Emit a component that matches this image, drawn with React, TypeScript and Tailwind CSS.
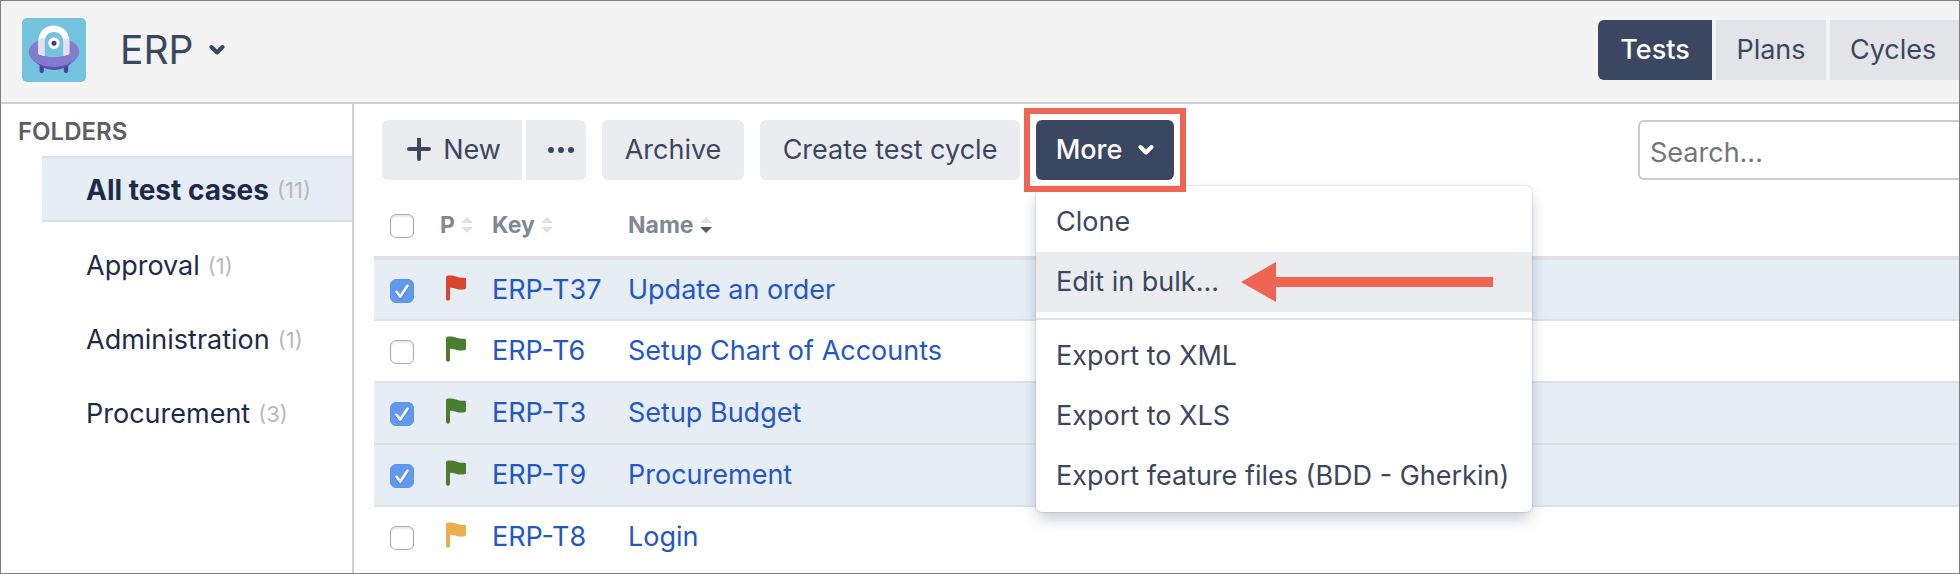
import { useState } from "react";

type Folder = { name: string; count: number };
type Row = { key: string; name: string; flag: string; checked: boolean };

const folders: Folder[] = [
  { name: "All test cases", count: 11 },
  { name: "Approval", count: 1 },
  { name: "Administration", count: 1 },
  { name: "Procurement", count: 3 },
];

const initialRows: Row[] = [
  { key: "ERP-T37", name: "Update an order", flag: "text-[#db4430]", checked: true },
  { key: "ERP-T6", name: "Setup Chart of Accounts", flag: "text-[#4a7d2f]", checked: false },
  { key: "ERP-T3", name: "Setup Budget", flag: "text-[#4a7d2f]", checked: true },
  { key: "ERP-T9", name: "Procurement", flag: "text-[#4a7d2f]", checked: true },
  { key: "ERP-T8", name: "Login", flag: "text-[#eaae50]", checked: false },
];

function Chevron() {
  return (
    <svg width="16" height="12" viewBox="0 0 16 12" fill="none" stroke="currentColor" strokeWidth="4" strokeLinecap="round" strokeLinejoin="round" aria-hidden="true">
      <path d="M2.5 3 8 8.5 13.5 3" />
    </svg>
  );
}

function Flag({ color }: { color: string }) {
  return (
    <svg className={color} width="20" height="26" viewBox="0 0 20 26" fill="currentColor" aria-hidden="true">
      <path d="M0 2.2Q0 1 1.2.8C4 .2 7 .3 10 1.4C12.500 2.400 15.500 2.900 18.200 2.700Q20 2.600 20 4V12.600Q20 14 18.600 14.300C15.500 14.900 12.600 14.600 10 13.700C8 12.900 6 12.600 4 12.700V24Q4 25.800 2 25.800Q0 25.800 0 24Z" />
    </svg>
  );
}

function Logo() {
  return (
    <svg width="64" height="64" viewBox="0 0 64 64" aria-hidden="true">
      <rect width="64" height="64" rx="5" fill="#73c3de" />
      <rect x="17.500" y="44" width="4.400" height="11" rx="2.200" fill="#4a419c" />
      <rect x="41.800" y="44" width="4.400" height="11" rx="2.200" fill="#4a419c" />
      <path d="M11 42C17 48 24 52 32 52S47 48 53 42Z" fill="#5e50ae" />
      <ellipse cx="32" cy="34" rx="25.200" ry="15" fill="#837bcd" />
      <path d="M16.300 23.500C16.300 14 23 7.600 31.700 7.600S47.300 14 47.300 23.500V36C43 39.300 20.500 39.300 16.300 36Z" fill="#fff" />
      <path d="M16.300 21.800Q19 20.300 22.600 19.700V38Q18.500 37 16.300 36ZM47.300 21.800Q45 20.300 41.200 19.700V38Q45 37 47.300 36Z" fill="#e3e0f4" />
      <path d="M22.600 24C22.600 18 26.500 14 32 14S41.200 18 41.200 24V37.800Q32 40 22.600 37.800Z" fill="#73c3de" />
      <circle cx="32" cy="25.300" r="5.700" fill="#fff" />
      <circle cx="32" cy="25.300" r="2.500" fill="#43389a" />
    </svg>
  );
}

function SortIcon({ down = false }: { down?: boolean }) {
  return (
    <svg width="12" height="16" viewBox="0 0 12 16" aria-hidden="true">
      <path d="M0 6 6 0 12 6Z" fill="#dfe1e6" />
      <path d="M0 10 6 16 12 10Z" fill={down ? "#4d5a75" : "#dfe1e6"} />
    </svg>
  );
}

function Tick({ label, checked, onChange }: { label: string; checked: boolean; onChange: () => void }) {
  return (
    <span className="relative top-px block size-6">
      <input
        type="checkbox"
        aria-label={label}
        checked={checked}
        onChange={onChange}
        className="peer block size-6 appearance-none rounded-md border border-[#a9a9a9] bg-white shadow-[inset_0_2px_2px_#e8e8e8] checked:border-[#5a94ec] checked:bg-[#6299ef] checked:shadow-none"
      />
      <svg className="pointer-events-none absolute inset-0 hidden peer-checked:block" width="24" height="24" viewBox="0 0 24 24" fill="none" strokeWidth="2.600" strokeLinecap="round" strokeLinejoin="round" aria-hidden="true">
        <path d="M6.500 14 10.200 19 17.500 8" stroke="#4379c8" />
        <path d="M6.500 12.800 10.200 17.800 17.500 6.800" stroke="#fff" />
      </svg>
    </span>
  );
}

const menuItem = "flex h-15 w-full items-center px-5 text-left hover:bg-[#ebecf0]";
const tool = "flex h-15 items-center justify-center bg-[#ebecf0]";

export default function App() {
  const [rows, setRows] = useState(initialRows);
  const toggle = (key: string) =>
    setRows(rows.map((r) => (r.key === key ? { ...r, checked: !r.checked } : r)));
  const all = rows.every((r) => r.checked);

  return (
    <div className="flex min-h-screen flex-col overflow-hidden border border-[#7f7f7f] bg-white font-[Inter,sans-serif] text-[27px] leading-8 whitespace-nowrap text-[#3b4660]">
      <header className="flex items-center border-b-2 border-[#d0d0d0] bg-[#f4f4f4] pt-[17px] pb-5 pl-[21px]">
        <Logo />
        <button type="button" className="ml-8.5 flex items-center gap-4 text-[39px] leading-12">
          ERP
          <Chevron />
        </button>
        <nav className="ml-auto flex gap-1">
          <a href="#tests" aria-current="page" className="flex h-15 w-[114px] items-center justify-center rounded-l-md bg-[#3b4660] font-medium text-white">Tests</a>
          <a href="#plans" className="flex h-15 w-[110px] items-center justify-center bg-[#e2e4e8]">Plans</a>
          <a href="#cycles" className="flex h-15 w-[129px] items-center bg-[#e2e4e8] pl-5">Cycles</a>
        </nav>
      </header>

      <div className="flex flex-1">
        <aside className="w-[353px] shrink-0 border-r-2 border-[#d0d0d0] pt-3">
          <h2 className="pl-[17px] text-[24px] font-semibold text-[#5e5e5e]">FOLDERS</h2>
          <ul className="mt-2 flex flex-col gap-2 pl-[41px]">
            {folders.map((f, i) => (
              <li key={f.name}>
                <a
                  href={"#" + f.name}
                  className={
                    i === 0
                      ? "flex h-[66px] items-center gap-2 border-y-2 border-[#d8e1ef] bg-[#e7edf5] pt-0.5 pl-11 text-[28px] font-bold text-[#1d2b4b]"
                      : "flex h-[66px] items-center gap-2 pt-1.5 pl-11 text-[#1d2b4b]"
                  }
                >
                  {f.name}
                  <span className="text-[22px] font-normal text-[#b9b9b9]">({f.count})</span>
                </a>
              </li>
            ))}
          </ul>
        </aside>

        <main className="min-w-0 flex-1 pt-4 pl-5">
          <div className="flex items-center gap-4 pl-2">
            <div className="flex gap-1">
              <button type="button" className={tool + " w-[140px] gap-3 rounded-l-md pl-1"}>
                <svg width="24" height="24" viewBox="0 0 24 24" stroke="currentColor" strokeWidth="4" strokeLinecap="round" aria-hidden="true">
                  <path d="M12 1V21M2 11H22" />
                </svg>
                New
              </button>
              <button type="button" aria-label="More options for new" className={tool + " w-15 rounded-r-md pl-2.5"}>
                <svg width="26" height="6" viewBox="0 0 26 6" fill="currentColor" aria-hidden="true">
                  <circle cx="3" cy="3" r="3" />
                  <circle cx="13" cy="3" r="3" />
                  <circle cx="23" cy="3" r="3" />
                </svg>
              </button>
            </div>
            <button type="button" className={tool + " w-[142px] rounded-md"}>Archive</button>
            <button type="button" className={tool + " w-[260px] rounded-md"}>Create test cycle</button>
            <div className="relative">
              <button type="button" aria-haspopup="menu" aria-expanded="true" className="flex h-15 w-[138px] items-center justify-center gap-4 rounded-md bg-[#3b4660] font-medium text-white">
                More
                <Chevron />
              </button>
              <div role="menu" className="absolute top-[66px] left-0 z-10 w-[496px] rounded-md bg-white py-1.5 shadow-[0_0_2px_rgba(9,30,66,0.31),0_8px_16px_-2px_rgba(9,30,66,0.25)]">
                <button type="button" role="menuitem" className={menuItem}>Clone</button>
                <button type="button" role="menuitem" className={menuItem + " relative bg-[#ebecf0]"}>
                  Edit in bulk...
                  <svg className="absolute top-2.5 left-[205px]" width="252" height="40" viewBox="0 0 252 40" fill="#ee6553" aria-hidden="true">
                    <path d="M0 20 35 0V15H252V25H35V40Z" />
                  </svg>
                </button>
                <hr className="my-1.5 border-t-2 border-[#dfe1e6]" />
                <button type="button" role="menuitem" className={menuItem}>Export to XML</button>
                <button type="button" role="menuitem" className={menuItem}>Export to XLS</button>
                <button type="button" role="menuitem" className={menuItem}>Export feature files (BDD - Gherkin)</button>
              </div>
              <div className="pointer-events-none absolute -inset-3 z-20 border-6 border-[#ee6553]" />
            </div>
            <input
              type="search"
              aria-label="Search"
              placeholder="Search..."
              className="ml-auto h-15 w-[321px] rounded-l-md border-2 border-r-0 border-[#ccc] px-2.5 pt-1 placeholder:text-[#757575]"
            />
          </div>

          <table className="w-full table-fixed border-collapse text-left">
            <thead>
              <tr className="h-[78px] border-b-4 border-[#dfe1e6] text-[23px] text-[#7f8898]">
                <th className="w-[66px] pt-3.5 pl-4"><Tick label="Select all" checked={all} onChange={() => setRows(rows.map((r) => ({ ...r, checked: !all })))} /></th>
                <th className="w-[52px] pt-3.5 font-bold"><span className="flex items-center gap-1.5">P<SortIcon /></span></th>
                <th className="w-[136px] pt-3.5 font-bold"><span className="flex items-center gap-1.5">Key<SortIcon /></span></th>
                <th className="pt-3.5 font-bold"><span className="flex items-center gap-1.5">Name<SortIcon down /></span></th>
              </tr>
            </thead>
            <tbody className="text-[#2457c5]">
              {rows.map((r) => (
                <tr key={r.key} className={(r.checked ? "bg-[#e7edf5]" : "bg-white") + " h-[62px] border-b-2 border-[#dfe1e6] last:h-[60px] last:border-b-0"}>
                  <td className="pl-4"><Tick label={"Select " + r.key} checked={r.checked} onChange={() => toggle(r.key)} /></td>
                  <td className="pb-1 pl-1.5"><Flag color={r.flag} /></td>
                  <td><a href={"#" + r.key}>{r.key}</a></td>
                  <td><a href={"#" + r.key}>{r.name}</a></td>
                </tr>
              ))}
            </tbody>
          </table>
        </main>
      </div>
    </div>
  );
}
